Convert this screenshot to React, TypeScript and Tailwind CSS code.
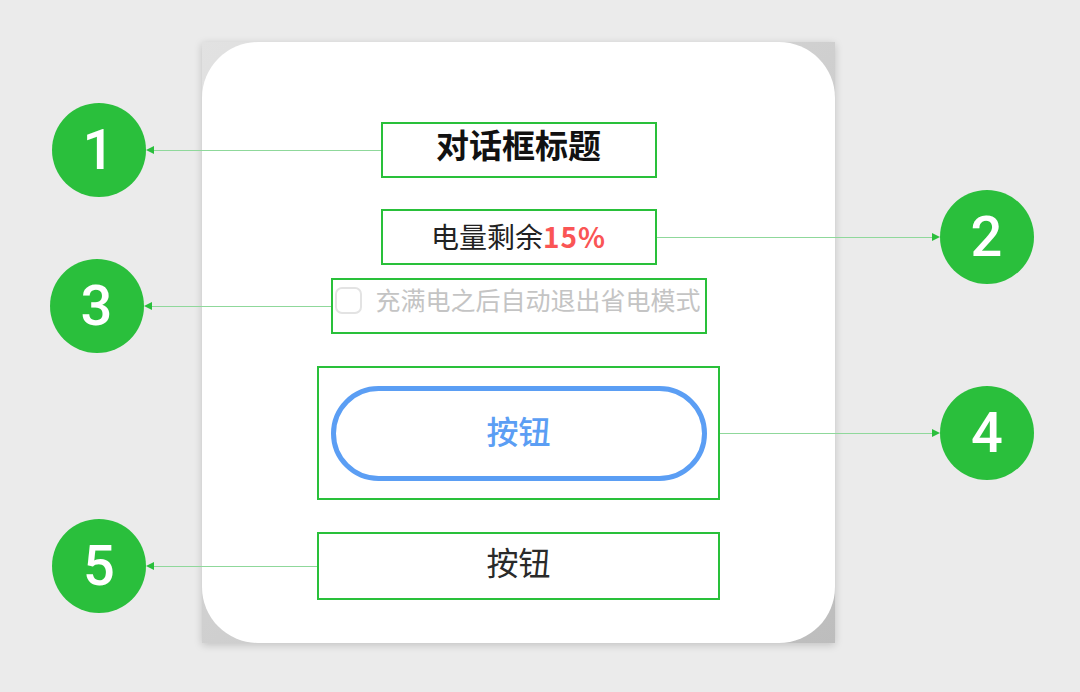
const CJK = "font-['Noto_Sans_CJK_SC','Noto_Sans',sans-serif]";

function Badge({ n }: { n: string }) {
  return (
    <div className="w-[94px] h-[94px] shrink-0 rounded-full bg-[#2abf3c] flex items-center justify-center">
      <span className="text-white text-[56px] leading-none font-medium font-['Roboto','Liberation_Sans',sans-serif]">{n}</span>
    </div>
  );
}

// callout line + arrow head + numbered circle, hung off a box edge
function Callout({ n, side, len }: { n: string; side: 'left' | 'right'; len: string }) {
  if (side === 'left') {
    return (
      <div className="absolute right-full top-1/2 -translate-y-1/2 mr-[2px] flex items-center pointer-events-none">
        <Badge n={n} />
        <div className="w-0 h-0 border-y-[4px] border-y-transparent border-r-[8px] border-r-[#2abf3c]" />
        <div className={`h-px bg-[#8fd89b] ${len}`} />
      </div>
    );
  }
  return (
    <div className="absolute left-full top-1/2 -translate-y-1/2 ml-[2px] flex items-center pointer-events-none">
      <div className={`h-px bg-[#8fd89b] ${len}`} />
      <div className="w-0 h-0 border-y-[4px] border-y-transparent border-l-[8px] border-l-[#2abf3c]" />
      <Badge n={n} />
    </div>
  );
}

export default function App() {
  return (
    <div className={`w-full h-[692px] bg-[#ebebeb] pt-[42px] pl-[202px] ${CJK}`}>
      <div className="w-[633px] h-[601px] bg-linear-to-br from-[#e2e2e2] to-[#bdbdbd] shadow-[0_2px_8px_rgba(0,0,0,0.18)]">
        <div className="w-full h-full bg-white rounded-[56px] flex flex-col items-center pt-[80px]">
          {/* 1 title */}
          <div className="relative w-[276px] h-[56px] border-2 border-[#29c03a] flex items-center justify-center pb-[12px]">
            <span className="text-[33px] font-bold text-[#111] leading-none">对话框标题</span>
            <Callout n="1" side="left" len="w-[227px]" />
          </div>

          {/* 2 battery */}
          <div className="relative mt-[31px] w-[276px] h-[56px] border-2 border-[#29c03a] flex items-center justify-center pb-[2px]">
            <span className="text-[28px] text-[#222] leading-none">
              电量剩余<span className="font-bold text-[#fa5555] tracking-[1px]">15%</span>
            </span>
            <Callout n="2" side="right" len="w-[275px]" />
          </div>

          {/* 3 checkbox */}
          <div className="relative mt-[13px] w-[376px] h-[56px] border-2 border-[#29c03a] flex items-start pl-[2px] pt-[7px]">
            <div className="w-[27px] h-[27px] rounded-[7px] border-2 border-[#e3e3e3] shrink-0" />
            <span className="ml-[14px] text-[25px] text-[#c4c4c4] leading-[25px]">充满电之后自动退出省电模式</span>
            <Callout n="3" side="left" len="w-[179px]" />
          </div>

          {/* 4 outline button */}
          <div className="relative mt-[32px] w-[403px] h-[134px] border-2 border-[#29c03a] flex items-center justify-center">
            <button className="w-[376px] h-[95px] rounded-full border-[5px] border-[#5b9ef4] flex items-center justify-center pb-[6px]">
              <span className="text-[32px] font-medium text-[#5b9ef4] leading-none">按钮</span>
            </button>
            <Callout n="4" side="right" len="w-[212px]" />
          </div>

          {/* 5 text button */}
          <div className="relative mt-[32px] w-[403px] h-[68px] border-2 border-[#29c03a] flex items-center justify-center pb-[10px]">
            <span className="text-[32px] text-[#2a2a2a] leading-none">按钮</span>
            <Callout n="5" side="left" len="w-[163px]" />
          </div>
        </div>
      </div>
    </div>
  );
}
